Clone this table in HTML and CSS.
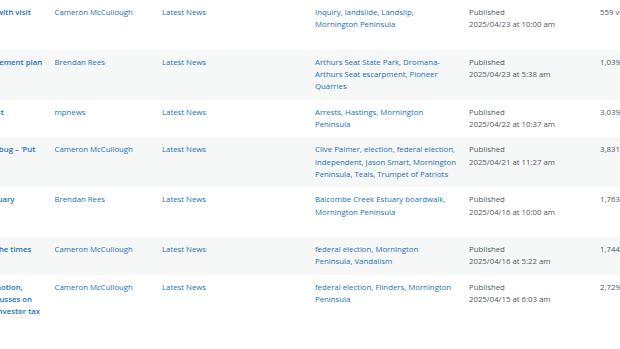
FILE: index.html
```html
<!DOCTYPE html>
<html lang="en">
<head>
<meta charset="utf-8">
<title>Posts</title>
<link rel="stylesheet" href="styles.css">
</head>
<body>
<div class="viewport">
<table class="posts">
  <colgroup>
    <col class="c-title">
    <col class="c-author">
    <col class="c-cat">
    <col class="c-tags">
    <col class="c-date">
    <col class="c-views">
  </colgroup>
  <tbody>
    <tr>
      <td class="title"><a class="row-title" href="#">Landslide inquiry now gets underway with visit<br>to Mount Martha</a><div class="row-actions">Edit | Quick Edit | Trash | View</div></td>
      <td><a href="#">Cameron McCullough</a></td>
      <td><a href="#">Latest News</a></td>
      <td class="tags"><a href="#">Inquiry</a>, <a href="#">landslide</a>, <a href="#">Landslip</a>, <a href="#">Mornington Peninsula</a></td>
      <td class="date">Published<br>2025/04/23 at 10:00 am</td>
      <td class="views">559 views</td>
    </tr>
    <tr>
      <td class="title"><a class="row-title" href="#">Outrage at Arthurs Seat quarry management plan<br>released</a><div class="row-actions">Edit | Quick Edit | Trash | View</div></td>
      <td><a href="#">Brendan Rees</a></td>
      <td><a href="#">Latest News</a></td>
      <td class="tags"><a href="#">Arthurs Seat State Park</a>, <a href="#">Dromana-Arthurs Seat escarpment</a>, <a href="#">Pioneer Quarries</a></td>
      <td class="date">Published<br>2025/04/23 at 5:38 am</td>
      <td class="views">1,039 views</td>
    </tr>
    <tr>
      <td class="title"><a class="row-title" href="#">Hastings police make fresh drugs arrest</a><div class="row-actions">Edit | Quick Edit | Trash | View</div></td>
      <td><a href="#">mpnews</a></td>
      <td><a href="#">Latest News</a></td>
      <td class="tags"><a href="#">Arrests</a>, <a href="#">Hastings</a>, <a href="#">Mornington Peninsula</a></td>
      <td class="date">Published<br>2025/04/22 at 10:37 am</td>
      <td class="views">3,039 views</td>
    </tr>
    <tr>
      <td class="title"><a class="row-title" href="#">Rye man Jason Smart catches election bug – ‘Put<br>Peninsula first’</a><div class="row-actions">Edit | Quick Edit | Trash | View</div></td>
      <td><a href="#">Cameron McCullough</a></td>
      <td><a href="#">Latest News</a></td>
      <td class="tags"><a href="#">Clive Palmer</a>, <a href="#">election</a>, <a href="#">federal election</a>, <a href="#">independent</a>, <a href="#">Jason Smart</a>, <a href="#">Mornington Peninsula</a>, <a href="#">Teals</a>, <a href="#">Trumpet of Patriots</a></td>
      <td class="date">Published<br>2025/04/21 at 11:27 am</td>
      <td class="views">3,831 views</td>
    </tr>
    <tr>
      <td class="title"><a class="row-title" href="#">Boardwalk upgrades for Balcombe estuary<br>works complete</a><div class="row-actions">Edit | Quick Edit | Trash | View</div></td>
      <td><a href="#">Brendan Rees</a></td>
      <td><a href="#">Latest News</a></td>
      <td class="tags"><a href="#">Balcombe Creek Estuary boardwalk</a>, <a href="#">Mornington Peninsula</a></td>
      <td class="date">Published<br>2025/04/16 at 10:00 am</td>
      <td class="views">1,763 views</td>
    </tr>
    <tr>
      <td class="title"><a class="row-title" href="#">Election posters destroyed – a sign of the times</a><div class="row-actions">Edit | Quick Edit | Trash | View</div></td>
      <td><a href="#">Cameron McCullough</a></td>
      <td><a href="#">Latest News</a></td>
      <td class="tags"><a href="#">federal election</a>, <a href="#">Mornington Peninsula</a>, <a href="#">Vandalism</a></td>
      <td class="date">Published<br>2025/04/16 at 5:22 am</td>
      <td class="views">1,744 views</td>
    </tr>
    <tr>
      <td class="title"><a class="row-title" href="#">The Frankston housing debate stirs emotion,<br>while the Flinders candidate forum focusses on<br>housing affordability and a proposed investor tax</a><div class="row-actions">Edit | Quick Edit | Trash | View</div></td>
      <td><a href="#">Cameron McCullough</a></td>
      <td><a href="#">Latest News</a></td>
      <td class="tags"><a href="#">federal election</a>, <a href="#">Flinders</a>, <a href="#">Mornington Peninsula</a></td>
      <td class="date">Published<br>2025/04/15 at 6:03 am</td>
      <td class="views">2,729 views</td>
    </tr>
  </tbody>
</table>
</div>
</body>
</html>
```

FILE: styles.css
```css
html, body {
  margin: 0;
  padding: 0;
  background: #ffffff;
}

.viewport {
  width: 620px;
  height: 349px;
  overflow: hidden;
}

.posts {
  table-layout: fixed;
  border-collapse: collapse;
  border-spacing: 0;
  width: 825.5px;
  margin-left: -152px;
  font-family: "Open Sans", "Segoe UI", sans-serif;
  font-size: 7.8px;
  line-height: 12.3px;
  color: #50575e;
}

.c-title { width: 200px; }
.c-author { width: 107.5px; }
.c-cat { width: 153px; }
.c-tags { width: 154px; }
.c-date { width: 131px; }
.c-views { width: 80px; }

.posts tbody tr:nth-child(even) {
  background: #f6f7f7;
}

.posts td {
  vertical-align: top;
  padding: 6px 6.5px 5.3px;
  overflow: hidden;
}

.posts a {
  color: #2271b1;
  text-decoration: none;
}

.posts td.title {
  white-space: nowrap;
}

.row-title {
  font-weight: 600;
  color: #2271b1;
}

.row-actions {
  visibility: hidden;
  height: 12.3px;
  padding-top: 1.7px;
  color: #a7aaad;
}

.posts td.tags {
  padding-right: 6px;
}

.views {
  white-space: nowrap;
}
```
